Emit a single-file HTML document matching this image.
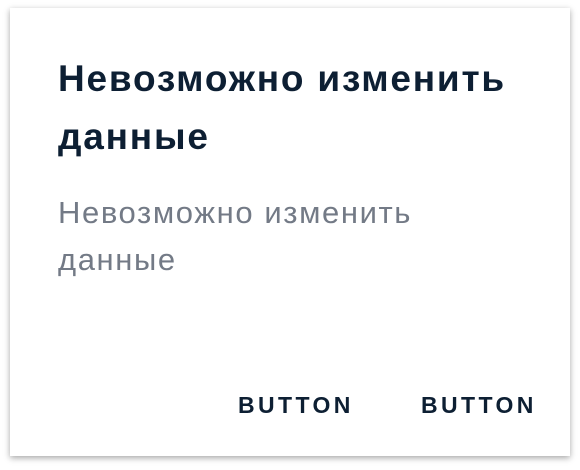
<!DOCTYPE html>
<html><head><meta charset="utf-8"><style>
body{margin:0;width:580px;height:470px;background:#fff;font-family:"Liberation Sans",sans-serif;overflow:hidden}
.card{position:absolute;left:10px;top:8px;width:560px;height:448px;background:#fff;box-shadow:0 2px 6px rgba(0,0,0,.35)}
.t{position:absolute;left:48px;top:42px;font-size:37px;font-weight:bold;line-height:58px;color:#0d1f33;letter-spacing:1.8px;white-space:nowrap}
.b{position:absolute;left:48px;top:181px;font-size:31px;line-height:47px;color:#737a86;letter-spacing:1.6px;white-space:nowrap}
.btn{position:absolute;top:377px;font-size:23px;font-weight:bold;color:#0d1f33;letter-spacing:3.4px;line-height:40px}
</style></head><body>
<div class="card">
<div class="t">Невозможно изменить<br>данные</div>
<div class="b">Невозможно изменить<br>данные</div>
<div class="btn" style="left:228px">BUTTON</div>
<div class="btn" style="left:411px">BUTTON</div>
</div>
</body></html>
